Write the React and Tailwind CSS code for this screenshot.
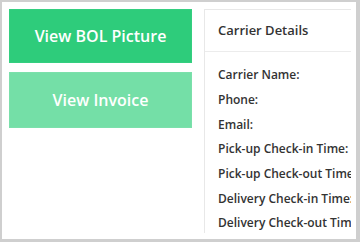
export default function App() {
  const labels = [
    'Carrier Name:',
    'Phone:',
    'Email:',
    'Pick-up Check-in Time:',
    'Pick-up Check-out Time:',
    'Delivery Check-in Time:',
    'Delivery Check-out Time:',
  ];

  return (
    <div
      className="h-[242px] w-[360px] bg-[#cfcfcf] pl-[2px] pt-[2px]"
      style={{ fontFamily: '"Open Sans", "Noto Sans", sans-serif' }}
    >
      <div className="flex h-[237px] w-[354px] gap-[12px] bg-white pl-[7px] pt-[7px]">
        <div className="flex w-[183px] shrink-0 flex-col gap-[9px]">
          <button
            type="button"
            className="flex h-[54px] items-center justify-center border border-[#34cf80] bg-[#2ecc7b] text-[16px] font-semibold text-white"
          >
            View BOL Picture
          </button>
          <button
            type="button"
            className="flex h-[56px] items-center justify-center border border-[#7be0ab] bg-[#74dfa7] text-[16px] font-semibold text-white"
          >
            View Invoice
          </button>
        </div>

        <div className="h-[224px] w-[147px] overflow-hidden">
          <div className="h-[260px] w-[200px] border border-[#e8e8e8]">
            <div className="flex h-[42px] items-center border-b border-[#ececec] pl-[13px] text-[13px] font-semibold text-[#333]">
              Carrier Details
            </div>
            <div className="flex flex-col pl-[13px] pt-[11px]">
              {labels.map((l) => (
                <div
                  key={l}
                  className="flex h-[24.67px] items-center whitespace-nowrap text-[12px] font-semibold text-[#333]"
                >
                  {l}
                </div>
              ))}
            </div>
          </div>
        </div>
      </div>
    </div>
  );
}
